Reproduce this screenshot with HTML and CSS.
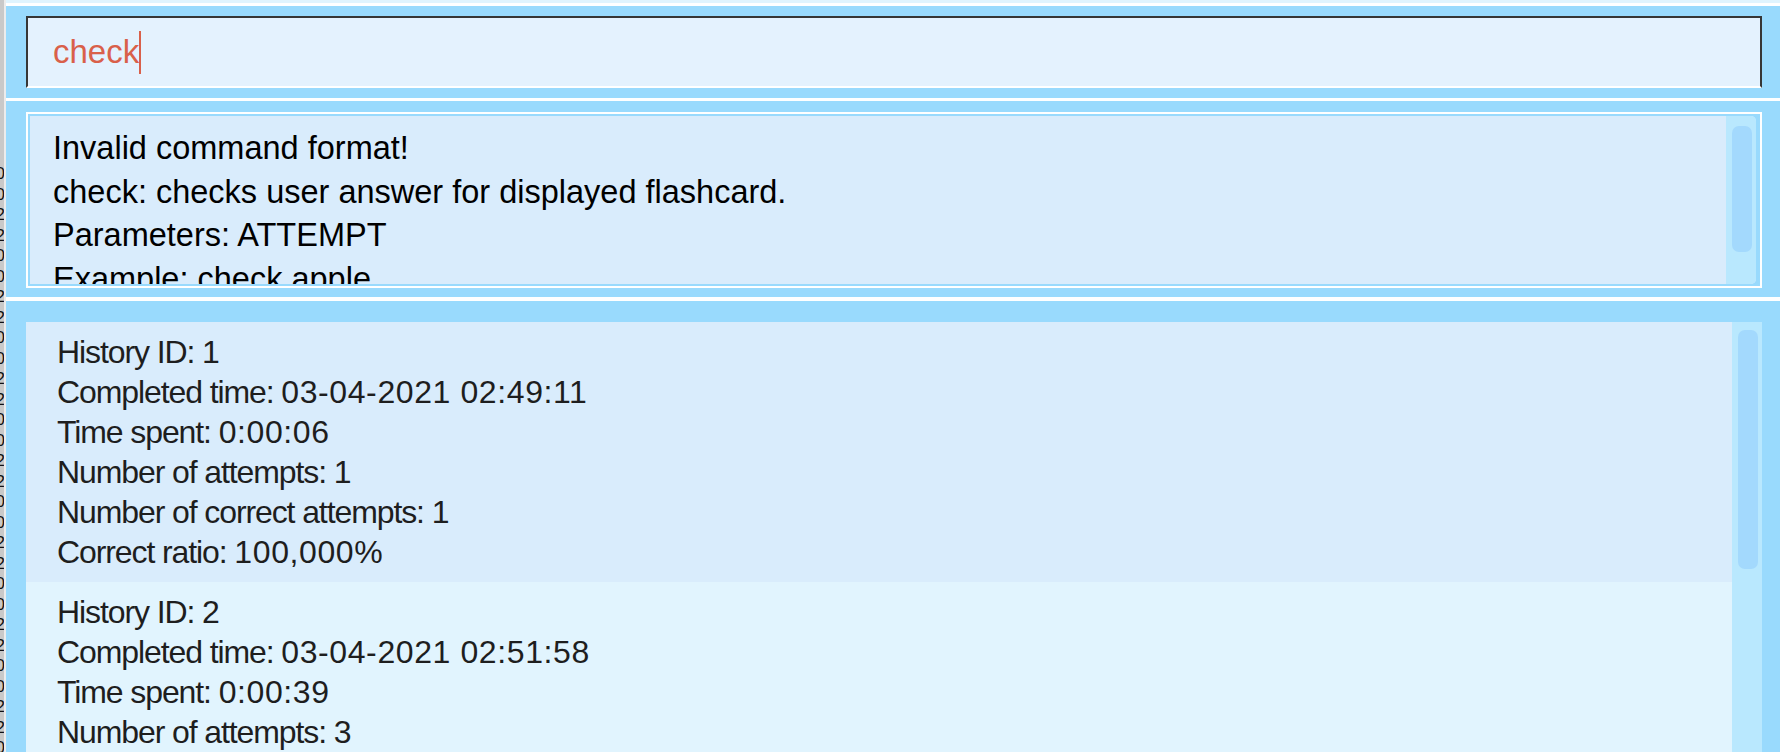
FILE: index.html
```html
<!DOCTYPE html>
<html>
<head>
<meta charset="utf-8">
<link rel="stylesheet" href="styles.css">
</head>
<body>
<div class="app">
  <div class="side">
    <div class="digits">0<br>0<br>2<br>2<br>0<br>0<br>2<br>2<br>0<br>0<br>2<br>2<br>0<br>0<br>2<br>2<br>0<br>0<br>2<br>2<br>0<br>0<br>2<br>2<br>0<br>0<br>2<br>2<br>0</div>
  </div>
  <div class="main">
    <div class="topbar"></div>
    <div class="pane command-pane">
      <div class="command-field"><span class="cmd-text">check</span><span class="caret"></span></div>
    </div>
    <div class="pane result-pane">
      <div class="result-box">
        <div class="result-inner">
          <div class="result-text">
            <div>Invalid command format!</div>
            <div>check: checks user answer for displayed flashcard.</div>
            <div>Parameters: ATTEMPT</div>
            <div>Example: check apple</div>
          </div>
          <div class="track result-track"><div class="thumb result-thumb"></div></div>
        </div>
      </div>
    </div>
    <div class="pane list-pane">
      <div class="list">
        <div class="cell cell-odd">
          <div><span class="label">History ID: </span><span class="value">1</span></div>
          <div><span class="label">Completed time: </span><span class="value">03-04-2021 02:49:11</span></div>
          <div><span class="label">Time spent: </span><span class="value">0:00:06</span></div>
          <div><span class="label">Number of attempts: </span><span class="value">1</span></div>
          <div><span class="label">Number of correct attempts: </span><span class="value">1</span></div>
          <div><span class="label">Correct ratio: </span><span class="value">100,000%</span></div>
        </div>
        <div class="cell cell-even">
          <div><span class="label">History ID: </span><span class="value">2</span></div>
          <div><span class="label">Completed time: </span><span class="value">03-04-2021 02:51:58</span></div>
          <div><span class="label">Time spent: </span><span class="value">0:00:39</span></div>
          <div><span class="label">Number of attempts: </span><span class="value">3</span></div>
          <div><span class="label">Number of correct attempts: </span><span class="value">1</span></div>
          <div><span class="label">Correct ratio: </span><span class="value">33,333%</span></div>
        </div>
      </div>
      <div class="track list-track"><div class="thumb list-thumb"></div></div>
    </div>
  </div>
</div>
</body>
</html>
```

FILE: styles.css
```css
html, body {
  margin: 0;
  padding: 0;
  height: 752px;
  overflow: hidden;
  background: #99dafd;
  font-family: "Liberation Sans", Arial, sans-serif;
}

.app {
  display: flex;
  height: 752px;
}

.side {
  width: 4px;
  flex: none;
  background: #c9c9c9;
  border-right: 2px solid #ececec;
  overflow: hidden;
}

.digits {
  width: 10px;
  margin-left: -5px;
  padding-top: 164px;
  text-align: right;
  font-size: 17px;
  line-height: 20.5px;
  color: #111;
}

.main {
  flex: 1;
  display: flex;
  flex-direction: column;
  min-width: 0;
}

.topbar {
  height: 3px;
  background: #e0f4fe;
  border-bottom: 3px solid #ffffff;
  flex: none;
}

.pane {
  background: #99dafd;
  flex: none;
}

.command-pane {
  padding: 10px 18px 10px 20px;
  border-bottom: 3px solid #ffffff;
}

.command-field {
  height: 68px;
  border: 2px solid #363636;
  border-bottom-color: #ffffff;
  background: #e4f2fe;
  display: flex;
  align-items: center;
  padding-left: 25px;
}

.cmd-text {
  font-size: 33px;
  color: #d9604a;
}

.caret {
  display: inline-block;
  width: 2px;
  height: 43px;
  background: #d9604a;
}

.result-pane {
  padding: 11px 18px 9px 20px;
  border-bottom: 4px solid #ffffff;
}

.result-box {
  border: 2px solid #ffffff;
  padding: 2px 4px 2px 2px;
}

.result-inner {
  height: 168px;
  display: flex;
  background: #d9ecfc;
  border-radius: 0 5px 5px 0;
  overflow: hidden;
}

.result-text {
  flex: 1;
  padding: 11px 0 0 23px;
  font-size: 32.5px;
  line-height: 43.5px;
  color: #000;
  overflow: hidden;
}

.track {
  width: 30px;
  flex: none;
  background: #b9e8fe;
}

.thumb {
  width: 20px;
  margin-left: 6px;
  background: #a3d9fd;
  border-radius: 7px;
}

.result-thumb {
  margin-top: 10px;
  height: 126px;
}

.list-pane {
  flex: 1;
  min-height: 0;
  padding: 21px 18px 0 20px;
  display: flex;
  overflow: hidden;
}

.list {
  flex: 1;
  min-width: 0;
}

.cell {
  padding: 10px 0 10px 31px;
  font-size: 32px;
  line-height: 40px;
  color: #1e1e1e;
}

.label {
  letter-spacing: -1.1px;
}

.value {
  letter-spacing: 0.6px;
}

.cell-odd {
  background: #d9ecfc;
}

.cell-even {
  background: #e1f4fe;
}

.list-thumb {
  margin-top: 8px;
  height: 239px;
}
```
